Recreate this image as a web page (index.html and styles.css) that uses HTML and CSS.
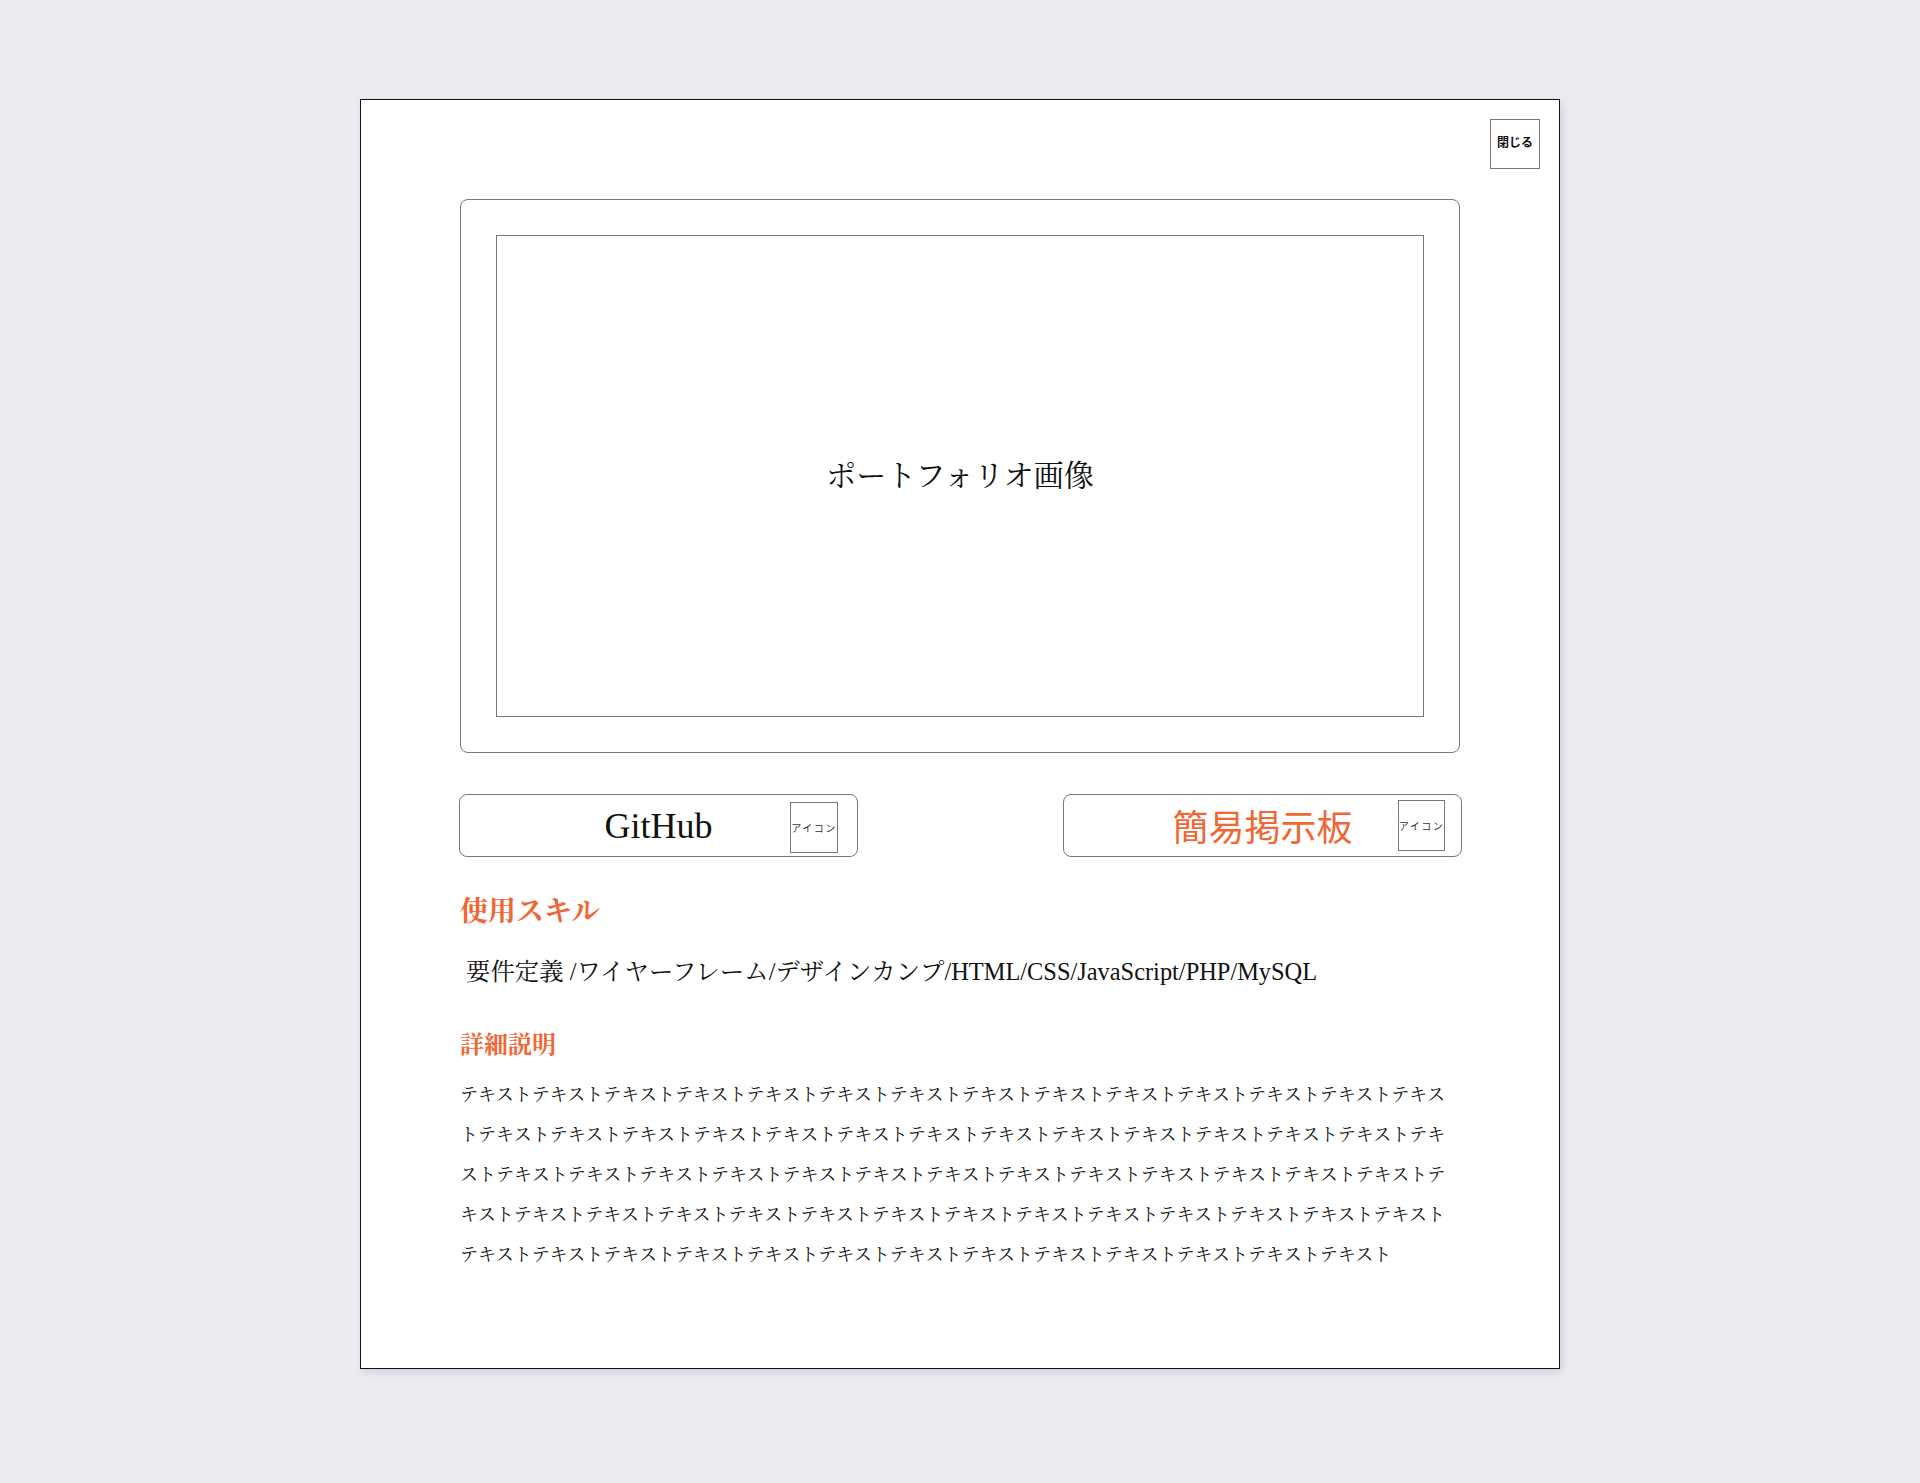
FILE: index.html
```html
<!DOCTYPE html>
<html lang="ja">
<head>
<meta charset="utf-8">
<title>ポートフォリオ詳細</title>
<link rel="stylesheet" href="styles.css">
</head>
<body>
<div class="modal">
  <button class="close-btn" type="button">閉じる</button>
  <div class="visual">
    <div class="visual-inner">ポートフォリオ画像</div>
  </div>
  <div class="links">
    <a class="link-btn link-btn--github" href="#"><span class="link-label">GitHub</span><span class="link-icon link-icon--github">アイコン</span></a>
    <a class="link-btn link-btn--board" href="#"><span class="link-label">簡易掲示板</span><span class="link-icon link-icon--board">アイコン</span></a>
  </div>
  <h2 class="skill-title">使用スキル</h2>
  <p class="skills">要件定義 /ワイヤーフレーム/デザインカンプ/HTML/CSS/JavaScript/PHP/MySQL</p>
  <h3 class="detail-title">詳細説明</h3>
  <p class="detail">テキストテキストテキストテキストテキストテキストテキストテキストテキストテキストテキストテキストテキストテキストテキストテキストテキストテキストテキストテキストテキストテキストテキストテキストテキストテキストテキストテキストテキストテキストテキストテキストテキストテキストテキストテキストテキストテキストテキストテキストテキストテキストテキストテキストテキストテキストテキストテキストテキストテキストテキストテキストテキストテキストテキストテキストテキストテキストテキストテキストテキストテキストテキストテキストテキストテキストテキストテキスト</p>
</div>
</body>
</html>
```

FILE: styles.css
```css
html, body {
  margin: 0;
  padding: 0;
}

body {
  background: #ebecf1;
  font-family: "Liberation Serif", "Noto Serif CJK JP", "Noto Sans CJK JP", serif;
  color: #111;
  min-height: 1483px;
}

.modal {
  position: relative;
  box-sizing: border-box;
  width: 1200px;
  margin: 99px auto 0;
  padding: 99px 99px 93px;
  background: #fff;
  border: 1px solid #111;
  box-shadow: 2px 3px 8px rgba(0, 0, 0, 0.12);
}

.close-btn {
  position: absolute;
  top: 19px;
  right: 19px;
  box-sizing: border-box;
  width: 50px;
  height: 50px;
  padding: 0 0 4px;
  background: #fff;
  border: 1px solid #777;
  font-family: "Noto Sans CJK JP", sans-serif;
  font-weight: 700;
  font-size: 12px;
  color: #111;
  line-height: 1;
}

.visual {
  box-sizing: border-box;
  height: 554px;
  padding: 35px;
  border: 1px solid #777;
  border-radius: 8px;
}

.visual-inner {
  box-sizing: border-box;
  height: 100%;
  border: 1px solid #777;
  display: flex;
  align-items: center;
  justify-content: center;
  font-size: 30px;
  line-height: 1.2;
  color: #111;
}

.links {
  display: flex;
  justify-content: space-between;
  margin: 41px -2px 0 -1px;
}

.link-btn {
  position: relative;
  box-sizing: border-box;
  width: 399px;
  height: 63px;
  border: 1px solid #777;
  border-radius: 8px;
  display: flex;
  align-items: center;
  justify-content: center;
  text-decoration: none;
  font-size: 36px;
  line-height: 1.2;
  color: #111;
}

.link-btn--github .link-label {
  padding-top: 3px;
}

.link-btn--board {
  color: #f26633;
  font-family: "Noto Sans CJK JP", sans-serif;
  font-weight: 400;
}

.link-icon {
  position: absolute;
  box-sizing: border-box;
  width: 48px;
  height: 51px;
  border: 1px solid #777;
  display: flex;
  align-items: center;
  justify-content: center;
  font-family: "Noto Sans CJK JP", sans-serif;
  font-size: 10px;
  letter-spacing: 1.5px;
  line-height: 1;
  color: #333;
  white-space: nowrap;
  overflow: hidden;
}

.link-icon--github {
  top: 7px;
  right: 19px;
}

.link-icon--board {
  top: 5px;
  right: 16px;
  width: 47px;
}

.skill-title {
  margin: 41px 0 0;
  font-size: 28px;
  line-height: 28px;
  font-weight: 700;
  color: #f26633;
}

.skills {
  margin: 28px 0 0;
  padding-left: 6px;
  font-size: 24.4px;
  line-height: 36px;
  color: #111;
}

.detail-title {
  margin: 43px 0 0;
  font-size: 24px;
  line-height: 24px;
  font-weight: 700;
  color: #f26633;
}

.detail {
  margin: 18px 0 0;
  font-size: 18px;
  line-height: 40px;
  color: #111;
  word-break: break-all;
}
```
